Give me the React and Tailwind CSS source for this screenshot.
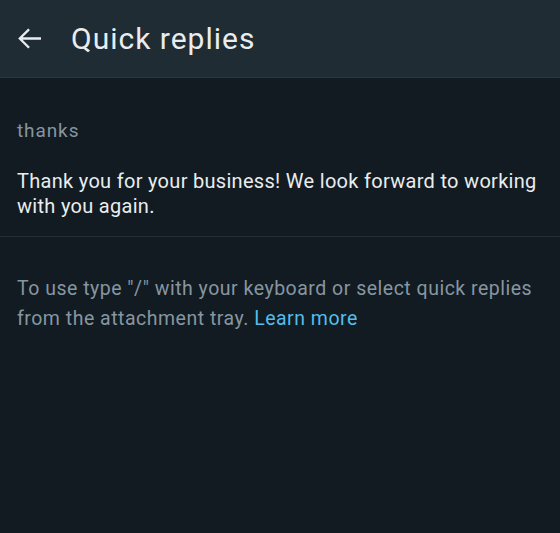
export default function App() {
  return (
    <div className="w-[560px] h-[533px] bg-[#121b22] flex flex-col" style={{ fontFamily: 'Roboto, "Noto Sans", sans-serif' }}>
      <div className="h-[78px] bg-[#1f2c34] border-b border-[#2a373f] flex items-center shrink-0">
        <svg className="ml-[14px] w-[31px] h-[31px]" viewBox="0 0 24 24" fill="none" stroke="#e9edef" strokeWidth="1.8" strokeLinecap="square">
          <path d="M20 12H5M11 5.5l-6.5 6.5 6.5 6.5" />
        </svg>
        <h1 className="ml-[26px] text-[30px] tracking-[1px] text-[#e9edef] leading-none">Quick replies</h1>
      </div>
      <div className="pl-[17px] pr-[10px] pt-[41px] pb-[17px] border-b border-[#222d34]">
        <div className="text-[19px] tracking-[0.9px] text-[#8696a0] leading-[24px]">thanks</div>
        <div className="mt-[26px] text-[20px] tracking-[0.3px] text-[#e9edef] leading-[25px]">
          Thank you for your business! We look forward to working with you again.
        </div>
      </div>
      <div className="pl-[17px] pr-[12px] pt-[37px] text-[19.5px] tracking-[0.5px] text-[#8696a0] leading-[30px]">
        To use type "/" with your keyboard or select quick replies from the attachment tray.{' '}
        <span className="text-[#53bdeb]">Learn more</span>
      </div>
    </div>
  );
}
